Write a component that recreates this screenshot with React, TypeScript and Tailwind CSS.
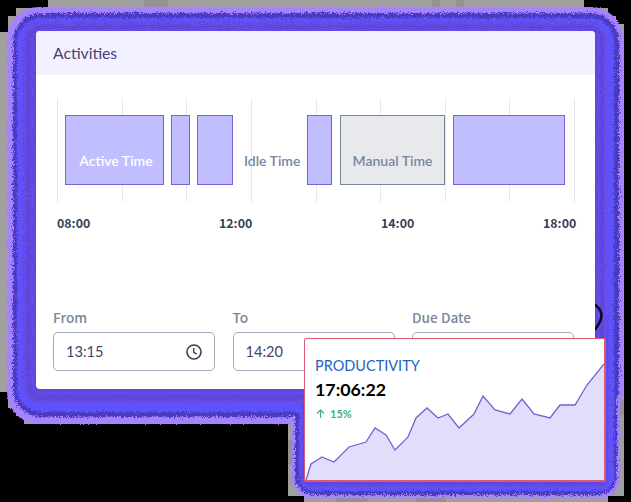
import React from 'react';

const layers = [
  { color: '#483bc0', main: [13, 13, 606, 404, 28], small: [295, 310, 322, 185, 19] },
  { color: '#6052fa', main: [17, 18, 597, 394, 24], small: [299, 310, 315, 181, 14] },
  { color: '#6048df', main: [23, 22, 583, 381, 18], small: [302, 310, 306, 176, 8] },
];

function Glow() {
  return (
    <svg className="absolute inset-0" width="631" height="502" viewBox="0 0 631 502">
      <defs>
        <filter id="grain" x="0" y="0" width="631" height="502" filterUnits="userSpaceOnUse" colorInterpolationFilters="sRGB">
          <feTurbulence type="fractalNoise" baseFrequency="1.37 1.43" numOctaves="3" seed="4" result="noise" />
          <feDisplacementMap in="SourceGraphic" in2="noise" scale="8" xChannelSelector="R" yChannelSelector="G" />
        </filter>
        <filter id="edge" x="0" y="0" width="631" height="502" filterUnits="userSpaceOnUse" colorInterpolationFilters="sRGB">
          <feTurbulence type="fractalNoise" baseFrequency="0.6" numOctaves="2" seed="9" result="noise" />
          <feDisplacementMap in="SourceGraphic" in2="noise" scale="3" xChannelSelector="R" yChannelSelector="G" />
        </filter>
      </defs>
      <path fill="#9e9f9e" d="M48 0H584V8H608V16H616V24H624V496H608V502H304V496H288V424H24V416H16V408H8V392H0V32H8V16H16V8H48Z" />
      <path fill="#929292" d="M144 0h24v8h-24zM432 0h8v8h-8zM456 0h8v8h-8zM616 400h8v16h-8zM336 498h32v4h-32zM416 498h30v4h-30zM288 440h5v24h-5z" />
      <g filter="url(#edge)" fill="#a583ff">
        <rect x="7" y="7" width="616" height="417" rx="32" />
        <rect x="292" y="310" width="328" height="188" rx="20" />
      </g>
      <g filter="url(#grain)">
        {layers.map(({ color, main, small }) => (
          <g key={color} fill={color}>
            <rect x={main[0]} y={main[1]} width={main[2]} height={main[3]} rx={main[4]} />
            <rect x={small[0]} y={small[1]} width={small[2]} height={small[3]} rx={small[4]} />
          </g>
        ))}
        <g fill="none" strokeWidth="1">
          <rect x="25" y="24" width="580" height="378" rx="16" stroke="#7552ef" />
          <rect x="28" y="27" width="574" height="371" rx="13" stroke="#5a3fcd" />
          <rect x="32" y="29" width="567" height="364" rx="10" stroke="#6650f0" />
        </g>
      </g>
      <path d="M591 302C605 310 605 319 591 334" fill="none" stroke="#0c0620" strokeWidth="2.5" />
    </svg>
  );
}

function Clock() {
  return (
    <svg width="16" height="16" viewBox="0 0 16 16" fill="none" stroke="#334155" strokeWidth="1.6">
      <circle cx="8" cy="8" r="7" />
      <path d="M7.7 4v4.3l3 1.8" strokeWidth="1.4" />
    </svg>
  );
}

function Field({ label, value, clock }: { label: string; value?: string; clock?: boolean }) {
  return (
    <div className="w-[162px]">
      <div className="h-6 font-['Noto_Sans_CJK_SC',sans-serif] text-[13.7px] leading-[18px] font-medium text-[#7a879b]">{label}</div>
      <div className="flex h-[39px] items-center justify-between rounded-[5px] border border-[#a5a9ba] px-3 text-[14.6px] text-[#454270]">
        <span>{value}</span>
        {clock && <Clock />}
      </div>
    </div>
  );
}

const bar = 'h-[70px] shrink-0 border border-[#7762d4] bg-[#c1beff]';

export default function App() {
  return (
    <div className="relative h-[502px] w-[631px] overflow-hidden bg-black pt-[31px] pl-9 font-['Lato',sans-serif]">
      <Glow />
      <main className="relative h-[358px] w-[559px] overflow-hidden rounded-[4px] bg-white">
        <header className="flex h-11 items-center bg-[#f3f1ff] pt-px pl-[17px] text-[15.7px] text-[#454270]">Activities</header>
        <section className="relative mt-[23px] ml-[21px] h-[104px] w-[518px]">
          <div className="absolute inset-0 flex justify-between">
            {Array.from({ length: 9 }, (_, i) => <i key={i} className="w-px bg-[#e6e8ec]" />)}
          </div>
          <div className="relative flex pt-[17px] pl-2 text-[14px] font-semibold text-[#7a879b]">
            <div className={`${bar} w-[99px] pt-[34px] text-center whitespace-nowrap text-white`}><span className="relative left-[1.5px]">Active Time</span></div>
            <div className={`${bar} ml-[7px] w-[18.5px]`} />
            <div className={`${bar} ml-[7px] w-[36.5px]`} />
            <div className="w-[74px] pt-[35px] pl-[11px] whitespace-nowrap">Idle Time</div>
            <div className={`${bar} w-[25px]`} />
            <div className="ml-2 h-[70px] w-[105px] shrink-0 border border-[#78849a] bg-[#e7e9ed] pt-[34px] text-center whitespace-nowrap">Manual Time</div>
            <div className={`${bar} ml-2 w-[112px]`} />
          </div>
        </section>
        <div className="mt-[12px] ml-[21px] flex h-5 font-['Noto_Sans_CJK_SC',sans-serif] text-[12.4px] leading-[18px] font-bold text-[#334155]">
          <span className="w-[162px]">08:00</span>
          <span className="w-[162px]">12:00</span>
          <span className="w-[162px]">14:00</span>
          <span>18:00</span>
        </div>
        <section className="mt-[74px] ml-[17px] flex gap-[17.5px]">
          <Field label="From" value="13:15" clock />
          <Field label="To" value="14:20" />
          <Field label="Due Date" />
        </section>
      </main>
      <aside className="absolute top-[338px] left-[304px] h-[144px] w-[302px] rounded-[2px] border border-r-2 border-b-2 border-[#dc5770] bg-white">
        <div className="pt-[18px] pl-[10px]">
          <div className="h-5 text-[14.5px] leading-[18px] text-[#2163c3]">PRODUCTIVITY</div>
          <div className="h-[29px] text-[17.8px] leading-[24px] font-bold text-black">17:06:22</div>
          <div className="flex items-center gap-[5px] text-[11px] leading-[15px] font-bold text-[#36b37e]">
            <svg width="10" height="10" viewBox="0 0 10 10" fill="none" stroke="currentColor" strokeWidth="1.2"><path d="M5.5 9V1M2 4.5l3.5-3.5L9 4.5" /></svg>
            <span>15%</span>
          </div>
        </div>
        <svg className="absolute top-0 left-0" width="299" height="141" viewBox="305 339 299 141">
          <path d="M306 480L311 464L322 457L334 462L349 447L366 442L375 428L386 435L395 450L408 437L416 418L427 408L438 418L448 414L459 428L474 414L483 396L495 410L510 414L522 399L534 414L550 418L560 405H575L587 385L604 364V480Z" fill="#e1defb" />
          <path d="M306 480L311 464L322 457L334 462L349 447L366 442L375 428L386 435L395 450L408 437L416 418L427 408L438 418L448 414L459 428L474 414L483 396L495 410L510 414L522 399L534 414L550 418L560 405H575L587 385L604 364" fill="none" stroke="#7263d2" strokeWidth="1.3" />
        </svg>
      </aside>
    </div>
  );
}
